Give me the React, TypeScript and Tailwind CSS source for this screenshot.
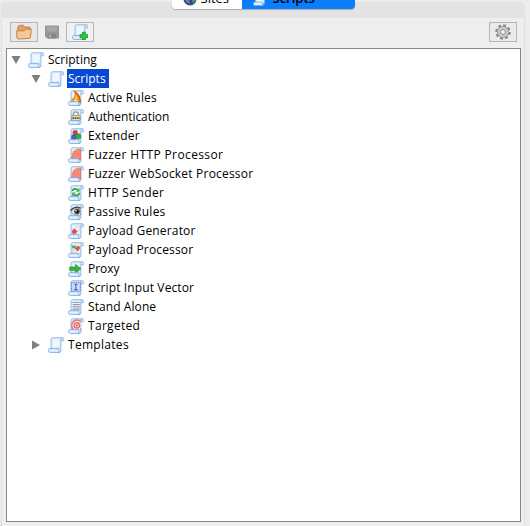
import React from "react";

type Kind =
  | "plain" | "flame" | "lock" | "blocks" | "burst" | "sync" | "eye"
  | "pill" | "pillArrow" | "arrow" | "cursor" | "lines" | "target" | "plus";

function Overlay({ kind }: { kind: Kind }) {
  switch (kind) {
    case "flame":
      return (
        <g>
          <path d="M5.2.8C9.8 1.2 13 6 12.8 13.2H10C10.3 10.8 9.2 9.6 8 9.3 6.8 10.2 6 11.6 3 12.4 2 10.8 4 9.2 5.6 7.4 7.4 5.2 6.8 3 5.2.8Z" fill="#f58a12" />
          <path d="M6.4 1.4C10.2 3.2 12 7 12.4 12.6" fill="none" stroke="#a85a20" strokeWidth="1" />
          <path d="M4.5 10.9C6 9.5 7.6 8 8 5.6 9.2 7 9.8 8.4 9.6 9.4 8 7.9 6.9 9.8 4.5 10.9Z" fill="#ffd23c" />
        </g>
      );
    case "lock":
      return (
        <g>
          <path d="M5.4 7V5.4a2.5 2.5 0 0 1 5 0V7" fill="none" stroke="#9a9a94" strokeWidth="1.3" />
          <rect x="3.6" y="6.6" width="8.6" height="5" rx=".6" fill="#e6e2a8" stroke="#8b8870" strokeWidth=".7" />
          <path d="M4.5 9.1h7" stroke="#45453c" strokeWidth="1.6" strokeDasharray="1.3 .7" />
        </g>
      );
    case "blocks":
      return (
        <g>
          <rect x="5" y="2.6" width="4.4" height="4.4" rx="1.3" fill="#cf4a45" stroke="#a33" strokeWidth=".5" />
          <rect x="3.6" y="7" width="4.4" height="4.6" rx="1.3" fill="#4468c0" stroke="#274a94" strokeWidth=".5" />
          <rect x="8.1" y="5.8" width="4.6" height="5" rx="1.3" fill="#3da549" stroke="#217a32" strokeWidth=".5" />
        </g>
      );
    case "burst":
      return <path d="M12.6 13V2L11 2.4 9.8 1.8 8.9 3.2 7.2 2.9 7 4.5 5.3 4.6 5.6 6.3 4 7.1 4.8 8.6 3.4 9.8 4.2 11.6H10.8L11.6 13Z" fill="#f98a72" stroke="#e26753" strokeWidth=".7" />;
    case "sync":
      return (
        <g fill="none" stroke="#2f9f3b" strokeWidth="1.8">
          <path d="M4.3 6C5.4 3.3 8.2 3.2 9.8 5M11.7 7.9C10.6 10.8 7.4 11 5.5 9.3" />
          <path d="M11.6 2.8v4H7.6ZM4 11.6v-4h4Z" fill="#4fb552" stroke="none" />
        </g>
      );
    case "eye":
      return (
        <g>
          <path d="M2.8 7.8C5.5 3.8 9.4 3.8 12.6 6.2V10.8C9 12.2 5.5 11 2.8 7.8Z" fill="#e4e4e4" stroke="#777" strokeWidth=".6" />
          <path d="M2.6 6.6C5 2.8 9.4 2.4 12.6 4.4" fill="none" stroke="#444" strokeWidth="1.4" />
          <circle cx="9" cy="7.6" r="2.8" fill="#505050" />
          <circle cx="9.4" cy="7.6" r="1.3" fill="#000" />
          <circle cx="8.2" cy="6.7" r=".8" fill="#fff" />
        </g>
      );
    case "pill":
      return (
        <g transform="rotate(-43 8 7)">
          <rect x="3.2" y="4.8" width="9.6" height="4.4" rx="2.2" fill="#f6efef" stroke="#b9b0b0" strokeWidth=".5" />
          <path d="M8 4.8H5.4a2.2 2.2 0 0 0 0 4.4H8Z" fill="#dc5052" />
        </g>
      );
    case "pillArrow":
      return (
        <g>
          <path d="M3.2 3.4h5.6l-1 1.4 1.4 2.6-3.4-1.2-1.2.6Z" fill="#5fae58" />
          <g transform="rotate(-43 8 8)">
            <rect x="3.4" y="6.2" width="9.4" height="3.6" rx="1.8" fill="#eee8e4" stroke="#aaa" strokeWidth=".5" />
            <path d="M8.2 6.2H11a1.8 1.8 0 0 1 0 3.6H8.2Z" fill="#cf5a50" />
          </g>
        </g>
      );
    case "arrow":
      return <path d="M1.6 6H7.4V3.2L13 7.8 7.4 12.2V9.6H1.6Z" fill="#3fae42" stroke="#2a8a36" strokeWidth=".6" />;
    case "cursor":
      return (
        <g fill="none" stroke="#4a5fc4">
          <rect x="3.4" y="2.4" width="9" height="8.8" fill="#cbd9f8" strokeWidth=".9" strokeDasharray="1.2 1" />
          <path d="M6.2 4.3h3.4M7.9 4.3v5.3M6.2 9.6h3.4" strokeWidth="1.1" />
        </g>
      );
    case "lines":
      return <path d="M4.6 3.5h7.2M4.6 5.7h7.2M4.6 7.9h7.2M4.6 10.1h7.2" stroke="#999fa2" strokeWidth="1.2" />;
    case "target":
      return (
        <g fill="#fbe3e3" stroke="#e57276" strokeWidth="1.4">
          <path d="M12.6 3.2A5.2 5.2 0 1 0 12.6 11.6Z" stroke="none" />
          <path d="M12.8 3.4A5.2 5.2 0 1 0 5.4 11.4M12.6 11.8V10.6" />
          <circle cx="8.9" cy="7.4" r="2.6" />
          <circle cx="8.9" cy="7.4" r=".5" />
        </g>
      );
    case "plus":
      return <path d="M10.3 8.3h3v2.4h2.4v3h-2.4v2.2h-3v-2.2H8v-3h2.3Z" fill="#2fc63d" stroke="#129126" strokeWidth=".8" />;
    default:
      return null;
  }
}

function Scroll({ kind = "plain", className = "size-4" }: { kind?: Kind; className?: string }) {
  return (
    <svg viewBox="0 0 16 16" className={`${className} shrink-0`}>
      <path d="M4.5.8H14.4Q15.8.9 15.6 3.8H12.9V13.5H3V2.5Q3 .8 4.5.8Z" fill="#d9ebfc" />
      <path d="M4.6 2.5h6.8v7.5H4.6Z" fill="#eef7ff" />
      <path d="M3 11.8V2.4Q3 .7 4.6.7h9.6Q15.6.7 15.6 2.4v1.4h-2.6" fill="none" stroke="#8db8e8" strokeWidth=".9" />
      <path d="M12.9 4V2.3Q12.9.9 14.1.9M12.9 4v9.6" fill="none" stroke="#8db8e8" strokeWidth=".9" />
      {kind !== "plus" && <Overlay kind={kind} />}
      <path d="M1.6 11.7h9.1v2q.2 1.7 1.3 1.7H2.2Q.5 15.3.5 13.5q0-1.6 1.1-1.8Z" fill="#e3f1ff" stroke="#78a9e2" strokeWidth=".9" />
      <path d="M11.8 15.4q1.2-.2 1.1-2.2" fill="none" stroke="#78a9e2" strokeWidth=".9" />
      {kind === "plus" && <Overlay kind="plus" />}
    </svg>
  );
}

const scripts: { label: string; kind: Kind; tracking: string }[] = [
  { label: "Active Rules", kind: "flame", tracking: "tracking-[0.18px]" },
  { label: "Authentication", kind: "lock", tracking: "tracking-[-0.07px]" },
  { label: "Extender", kind: "blocks", tracking: "tracking-[0.2px]" },
  { label: "Fuzzer HTTP Processor", kind: "burst", tracking: "tracking-[0.38px]" },
  { label: "Fuzzer WebSocket Processor", kind: "burst", tracking: "tracking-[0.2px]" },
  { label: "HTTP Sender", kind: "sync", tracking: "tracking-[0.39px]" },
  { label: "Passive Rules", kind: "eye", tracking: "tracking-[0.24px]" },
  { label: "Payload Generator", kind: "pill", tracking: "tracking-[0.16px]" },
  { label: "Payload Processor", kind: "pillArrow", tracking: "tracking-[0.15px]" },
  { label: "Proxy", kind: "arrow", tracking: "tracking-[0px]" },
  { label: "Script Input Vector", kind: "cursor", tracking: "tracking-[0.12px]" },
  { label: "Stand Alone", kind: "lines", tracking: "tracking-[0.08px]" },
  { label: "Targeted", kind: "target", tracking: "tracking-[0.3px]" },
];

function Disclosure({ open }: { open: boolean }) {
  return (
    <svg viewBox="0 0 10 10" className="mr-[7px] size-[10px] shrink-0">
      <path d={open ? "M.5 1h9L5 9Z" : "M1 .5v9L9 5Z"} fill="#7f7f7f" />
    </svg>
  );
}

export default function App() {
  return (
    <div className="flex h-[526px] w-[530px] flex-col overflow-hidden bg-[#ececec] pl-px font-['Open_Sans','Noto_Sans',sans-serif] text-[12px] text-black">
      <div className="flex h-[18px] w-[524px] items-start justify-center rounded-t-md border-t-2 border-[#ebebeb] bg-[#e3e3e3]">
        <div className="-mt-[2px] flex h-[9px] items-end overflow-hidden rounded-b-[4px] text-[13px] shadow-[0_1px_1px_#aaa]">
          <div className="flex h-[22px] w-[70px] shrink-0 items-center bg-white pl-[11px] pt-px">
            <svg viewBox="0 0 14 14" className="mr-[4px] size-[14px]">
              <circle cx="7" cy="7" r="6.5" fill="#443b9c" />
              <path d="M2 5l4 2 1 5-4-2ZM9 3l4 5-3 4-1-4Z" fill="#53936a" />
            </svg>
            Sites
          </div>
          <div className="flex h-[22px] w-[113px] shrink-0 items-center bg-[#0a7efc] pl-[11px] pt-px">
            <Scroll className="mr-[6px] size-[14px]" />
            <span className="font-semibold">Scripts</span>
            <span className="ml-1 text-[#1555aa]">-</span>
          </div>
        </div>
      </div>
      <div className="flex min-h-0 w-[524px] grow flex-col border-x border-[#e0e0e0] bg-[#eeeeee] pb-[4px] pl-[4px] pr-[3px] pt-1">
        <div className="flex h-[26px] items-start pl-[4px]">
          <div className="flex h-5 w-7 items-center justify-center border border-[#b5b5b5] bg-[#e8e8e8]">
            <svg viewBox="0 0 16 16" className="size-4">
              <path d="M1.4 13.5 1.8 3.3Q2 1.6 3.4 1.4l3.8-.2L8.6 3H13q1.4 0 1.3 1.6L14 13Z" fill="#dfa266" stroke="#b57838" strokeWidth=".8" />
              <path d="M.7 6.8h7.6l1.6-1.6h5.4L14.5 13q0 1.3-1.3 1.4L2.2 15Q1 15 .9 13.6Z" fill="#f3c899" stroke="#bb7b3d" strokeWidth=".9" />
            </svg>
          </div>
          <div className="flex h-5 w-7 items-center justify-center">
            <svg viewBox="0 0 16 16" className="size-4">
              <path d="M1 2.5Q1 1.5 2 1.5h12q1 0 1 1v12H3l-2-2Z" fill="#969696" />
              <path d="M3 2.5h10v5H3Z" fill="#a6a6a6" />
              <path d="M4 10h8v4.5H4Z" fill="#868686" />
              <path d="M5 11h2v2.5H5Z" fill="#b5b5b5" />
            </svg>
          </div>
          <div className="flex h-5 w-7 items-center justify-center border border-[#b5b5b5] bg-[#f1f1f1]">
            <Scroll kind="plus" />
          </div>
          <div className="ml-auto mr-[4px] flex h-5 w-7 items-center justify-center border border-[#b5b5b5] bg-[#ebebeb]">
            <svg viewBox="0 0 16 16" className="size-4">
              <circle cx="8" cy="8" r="6.6" fill="none" stroke="#8b8b8b" strokeWidth="2.4" strokeDasharray="2.9 2.284" />
              <circle cx="8" cy="8" r="4.3" fill="#eee" stroke="#ccc" strokeWidth="2.6" />
              <circle cx="8" cy="8" r="5.5" fill="none" stroke="#8b8b8b" strokeWidth=".8" />
              <circle cx="8" cy="8" r="2.5" fill="#f5f5f5" stroke="#777" strokeWidth=".9" />
            </svg>
          </div>
        </div>
        <div className="flex min-h-0 grow flex-col border border-[#858585] bg-white pt-[1px]">
          <div className="flex h-[19px] items-center pl-[4px]">
            <Disclosure open />
            <Scroll />
            <span className="ml-[4px]">Scripting</span>
          </div>
          <div className="flex h-[19px] items-center pl-[24px]">
            <Disclosure open />
            <Scroll />
            <span className="ml-[3px] flex h-[19px] w-[42px] items-center bg-[#0849d2] pl-px text-white">Scripts</span>
          </div>
          {scripts.map((s) => (
            <div key={s.label} className="flex h-[19px] items-center pl-[61px]">
              <Scroll kind={s.kind} />
              <span className={`ml-[4px] whitespace-nowrap ${s.tracking}`}>{s.label}</span>
            </div>
          ))}
          <div className="flex h-[19px] items-center pl-[24px]">
            <Disclosure open={false} />
            <Scroll />
            <span className="ml-[4px] tracking-[0.3px]">Templates</span>
          </div>
        </div>
      </div>
    </div>
  );
}
